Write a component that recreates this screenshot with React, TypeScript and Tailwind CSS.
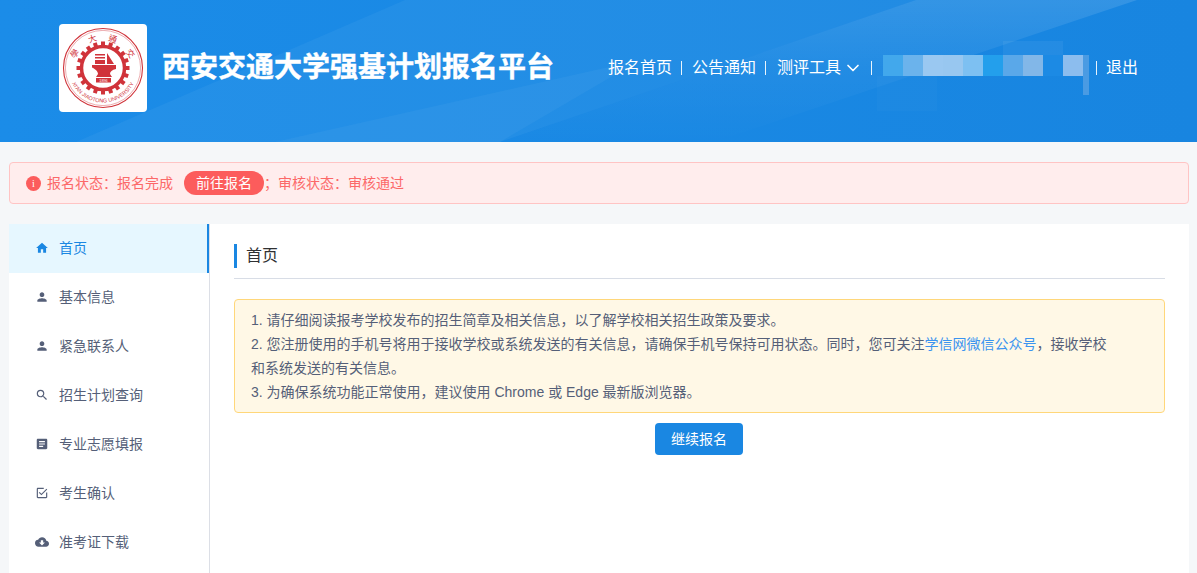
import React from 'react';
import { ChevronDown } from 'lucide-react';

const cjk = "font-['Liberation_Sans','Noto_Sans_CJK_SC',sans-serif]";

function HeaderBg() {
  return (
    <svg className="absolute inset-0 w-full h-full" viewBox="0 0 1197 142" preserveAspectRatio="none">
      <defs>
        <linearGradient id="bandFade" x1="0" y1="0" x2="0" y2="1">
          <stop offset="0" stopColor="#ffffff" stopOpacity="0.12" />
          <stop offset="0.5" stopColor="#ffffff" stopOpacity="0.04" />
          <stop offset="1" stopColor="#ffffff" stopOpacity="0" />
        </linearGradient>
      </defs>
      <polygon points="405,0 916,0 500,142 76,142" fill="#ffffff" fillOpacity="0.045" />
      <polygon points="275,142 640,60 500,142" fill="#ffffff" fillOpacity="0.04" />
      <polygon points="916,0 1137,0 714,142 500,142" fill="url(#bandFade)" />
    </svg>
  );
}

function Seal() {
  const teeth = Array.from({ length: 20 }, (_, i) => i * 18);
  const red = '#d0333a';
  const han = [
    { c: '學', x: 14, y: 28, r: -50 },
    { c: '大', x: 32, y: 13, r: -18 },
    { c: '通', x: 53, y: 13, r: 18 },
    { c: '交', x: 71, y: 28, r: 50 },
  ];
  return (
    <svg viewBox="0 0 86 86" className="w-[86px] h-[86px]">
      <defs>
        <path id="sealBottom" d="M 8.5 43 A 34.5 34.5 0 0 0 77.5 43" fill="none" />
      </defs>
      <circle cx="43" cy="43" r="39.5" fill="none" stroke={red} strokeWidth="1.1" />
      <circle cx="43" cy="43" r="37.6" fill="none" stroke={red} strokeWidth="0.4" />
      {teeth.map((a) => (
        <rect key={a} x="41" y="16.500" width="4" height="5" fill={red} transform={`rotate(${a} 43 43)`} />
      ))}
      <circle cx="43" cy="43" r="21.500" fill="none" stroke={red} strokeWidth="3.500" />
      <path d="M32 40 H56 V44 C52 45 50 46.500 50 49 L52 52 H36 L38 49 C38 46 35 44 32 42.500 Z" fill={red} />
      <path d="M35 29 H45 V30.500 H35 Z M35 32 H45 V33.500 H35 Z M35 35 H45 V39 H35 Z M47 28 L54 39 H47 Z" fill={red} />
      <rect x="36" y="53" width="15" height="4.500" fill={red} />
      <text x="43.500" y="56.800" textAnchor="middle" fontSize="3.800" fill="#fff" fontFamily="Liberation Sans">1896</text>
      <text fontSize="5.400" fill={red} fontFamily="Liberation Sans">
        <textPath href="#sealBottom" startOffset="50%" textAnchor="middle">XI'AN JIAOTONG UNIVERSITY</textPath>
      </text>
      {han.map((h) => (
        <text
          key={h.c}
          x={h.x}
          y={h.y}
          fontSize="8.500"
          fill={red}
          textAnchor="middle"
          dominantBaseline="central"
          fontFamily="Noto Sans CJK TC"
          transform={`rotate(${h.r} ${h.x} ${h.y})`}
        >
          {h.c}
        </text>
      ))}
    </svg>
  );
}

const mosaic = ['#42a8ec', '#6bb3ec', '#9ac8f1', '#98c7f0', '#7dc0f2', '#239fec', '#5aa8e9', '#82b7e8', '#1c8ae4', '#8cbdee'];

function Mosaic() {
  return (
    <div className="relative flex w-[206px] h-[21px] -mt-[6px]">
      {mosaic.map((c, i) => (
        <div key={i} className="w-[20px] h-full" style={{ backgroundColor: c }} />
      ))}
      <div className="absolute left-[200px] top-0 w-[6px] h-[40px] bg-[#4a9be3]" />
      <div className="absolute left-[120px] -top-[14px] w-[60px] h-[14px] bg-white/5" />
      <div className="absolute -left-[6px] top-[21px] w-[60px] h-[35px] bg-white/[0.02]" />
    </div>
  );
}

function Header() {
  return (
    <header className="relative h-[142px] bg-gradient-to-r from-[#1b8ce8] to-[#1885e0] overflow-hidden">
      <HeaderBg />
      <div className="relative flex items-center h-full pl-[59px] pr-[59px] pb-[6px]">
        <div className="w-[88px] h-[88px] bg-white rounded-[4px] flex items-center justify-center">
          <Seal />
        </div>
        <h1 className="ml-[15px] text-[28px] font-bold text-white leading-none [-webkit-text-stroke:0.4px_white]">西安交通大学强基计划报名平台</h1>
        <nav className="ml-auto flex items-center text-base text-white">
          <span>报名首页</span>
          <span className="w-px h-[14px] bg-white/90 ml-[9px] mr-[10px]" />
          <span>公告通知</span>
          <span className="w-px h-[14px] bg-white/90 ml-[9px] mr-[11px]" />
          <span>测评工具</span>
          <ChevronDown className="w-[20px] h-[20px] ml-[2px]" strokeWidth={2} />
          <span className="w-px h-[14px] bg-white/90 ml-[8px] mr-[11px]" />
          <Mosaic />
          <span className="w-px h-[14px] bg-white/90 ml-[7px] mr-[9px]" />
          <span>退出</span>
        </nav>
      </div>
    </header>
  );
}

const icons = {
  home: 'M10 20v-6h4v6h5v-8h3L12 3 2 12h3v8z',
  person: 'M12 12c2.21 0 4-1.79 4-4s-1.79-4-4-4-4 1.79-4 4 1.79 4 4 4zm0 2c-2.67 0-8 1.34-8 4v2h16v-2c0-2.66-5.33-4-8-4z',
  search: 'M15.5 14h-.79l-.28-.27A6.471 6.471 0 0 0 16 9.5 6.5 6.5 0 1 0 9.5 16c1.61 0 3.09-.59 4.23-1.57l.27.28v.79l5 4.99L20.49 19l-4.99-5zm-6 0C7.01 14 5 11.99 5 9.5S7.01 5 9.5 5 14 7.01 14 9.5 11.99 14 9.5 14z',
  article: 'M19 3H5c-1.1 0-2 .9-2 2v14c0 1.1.9 2 2 2h14c1.1 0 2-.9 2-2V5c0-1.1-.9-2-2-2zm-5 14H7v-2h7v2zm3-4H7v-2h10v2zm0-4H7V7h10v2z',
  check: 'M19 19H5V5h10V3H5c-1.1 0-2 .9-2 2v14c0 1.1.9 2 2 2h14c1.1 0 2-.9 2-2v-8h-2v8zM7.900 10.100 6.500 11.500 11 16 21 6l-1.400-1.400-8.600 8.600z',
  cloud: 'M19.35 10.04A7.49 7.49 0 0 0 12 4C9.11 4 6.6 5.64 5.35 8.04A5.994 5.994 0 0 0 0 14c0 3.31 2.69 6 6 6h13c2.76 0 5-2.24 5-5 0-2.64-2.05-4.78-4.65-4.96zM17 13l-5 5-5-5h3V9h4v4h3z',
};

const menu = [
  { label: '首页', icon: icons.home, active: true },
  { label: '基本信息', icon: icons.person },
  { label: '紧急联系人', icon: icons.person },
  { label: '招生计划查询', icon: icons.search },
  { label: '专业志愿填报', icon: icons.article },
  { label: '考生确认', icon: icons.check },
  { label: '准考证下载', icon: icons.cloud },
];

function Sidebar() {
  return (
    <aside className="w-[201px] shrink-0 bg-white border-r border-[#dcdfe6]">
      {menu.map((m) => (
        <div
          key={m.label}
          className={`h-[49px] flex items-center pl-[26px] pb-[2px] text-sm ${m.active ? 'bg-[#e6f7ff] text-[#1a87e2] border-r-2 border-[#1a87e2]' : 'text-[#555f78]'}`}
        >
          <svg viewBox="0 0 24 24" className="w-[14px] h-[14px] mr-[10px]" fill="currentColor">
            <path d={m.icon} />
          </svg>
          <span>{m.label}</span>
        </div>
      ))}
    </aside>
  );
}

function Main() {
  return (
    <main className="flex-1 bg-white px-[24px] pt-[20px]">
      <div className="pb-[10px] border-b border-[#d8dde6]">
        <div className="h-[24px] border-l-[3px] border-[#1a87e2] pl-[9px] text-base leading-[24px] text-[#303133]">首页</div>
      </div>
      <div className="mt-[20px] h-[114px] bg-[#fff8e6] border border-[#ffd77a] rounded-[4px] px-[16px] py-[8px] text-sm leading-[24px] text-[#555f78]">
        <p>1. 请仔细阅读报考学校发布的招生简章及相关信息，以了解学校相关招生政策及要求。</p>
        <p>2. 您注册使用的手机号将用于接收学校或系统发送的有关信息，请确保手机号保持可用状态。同时，您可关注<span className="text-[#3b94f0]">学信网微信公众号</span>，接收学校<br />和系统发送的有关信息。</p>
        <p>3. 为确保系统功能正常使用，建议使用 Chrome 或 Edge 最新版浏览器。</p>
      </div>
      <div className="mt-[10px] flex justify-center pr-[1px]">
        <button className="w-[88px] h-[32px] rounded-[4px] bg-[#1a87e2] text-white text-sm">继续报名</button>
      </div>
    </main>
  );
}

export default function App() {
  return (
    <div className={`h-screen overflow-hidden bg-[#f5f7f9] ${cjk}`}>
      <Header />
      <div className="pl-[9px] pr-[8px]">
        <div className="mt-[20px] h-[42px] flex items-center bg-[#ffeded] border border-[#ffc4c4] rounded-[4px] pl-[16px] text-sm text-[#fc6868]">
          <span className="w-[15px] h-[15px] rounded-full bg-[#fc5c5c] text-white text-[10px] leading-[15px] text-center font-['Liberation_Serif',serif] mr-[6px]">i</span>
          <span>报名状态：报名完成</span>
          <span className="ml-[11px] h-[24px] leading-[24px] px-[12px] rounded-full bg-[#fc5c5c] text-white">前往报名</span>
          <span>；审核状态：审核通过</span>
        </div>
        <div className="mt-[20px] flex h-[400px]">
          <Sidebar />
          <Main />
        </div>
      </div>
    </div>
  );
}
